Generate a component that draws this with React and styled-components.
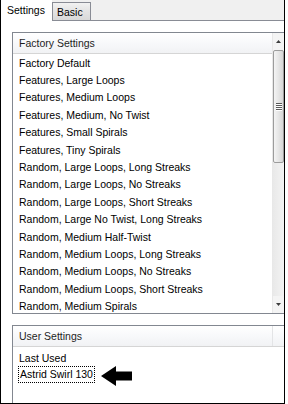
import React from "react";
import styled, { createGlobalStyle } from "styled-components";

const Global = createGlobalStyle`
  html, body { margin: 0; padding: 0; background: #ffffff; }
  body { font-family: "Liberation Sans", Arial, sans-serif; }
  * { box-sizing: border-box; }
`;

const Frame = styled.div`
  width: 285px;
  height: 404px;
  border-left: 1px solid #000;
  border-right: 1px solid #000;
  border-bottom: 1px solid #000;
  display: flex;
  flex-direction: column;
  font-family: "Liberation Sans", Arial, sans-serif;
  font-size: 10.5px;
  color: #000;
`;

const TabStrip = styled.div`
  height: 21px;
  display: flex;
  align-items: flex-end;
  background: #f0f0f0;
`;

const Tab = styled.div`
  height: ${(p) => (p.$active ? "21px" : "19px")};
  width: ${(p) => p.$w}px;
  display: flex;
  align-items: center;
  padding-left: ${(p) => (p.$active ? 6 : 4)}px;
  padding-bottom: ${(p) => (p.$active ? 1 : 0)}px;
  background: ${(p) =>
    p.$active ? "#ffffff" : "linear-gradient(#f2f2f2, #e3e3e3 50%, #d9d9d9)"};
  border: ${(p) => (p.$active ? "none" : "1px solid #898c95")};
  border-bottom: ${(p) => (p.$active ? "none" : "1px solid #898c95")};
`;

const StripFill = styled.div`
  flex: 1;
  height: 21px;
  border-bottom: 1px solid #898c95;
`;

const Panel = styled.div`
  flex: 1;
  display: flex;
  flex-direction: column;
  gap: 11px;
  padding: 11px 0 0 11px;
  background: #fff;
`;

const ListBox = styled.div`
  height: ${(p) => (p.$h ? `${p.$h}px` : "auto")};
  flex: ${(p) => (p.$h ? "0 0 auto" : "1")};
  border: 1px solid #828790;
  border-right: none;
  ${(p) => (p.$noBottom ? "border-bottom: none;" : "")}
  display: grid;
  grid-template-columns: 1fr 12px;
  grid-template-rows: 21px 1fr;
  overflow: hidden;
`;

const Header = styled.div`
  grid-column: ${(p) => (p.$full ? "1 / 3" : "1 / 2")};
  display: flex;
  border-bottom: 1px solid #d5d5d5;
  background: linear-gradient(#ffffff, #f7f8fa 55%, #f1f2f4);
`;

const HeaderCell = styled.div`
  flex: 1;
  display: flex;
  align-items: center;
  padding-left: 6px;
  color: #1e1e1e;
`;

const HeaderFill = styled.div`
  flex: 0 0 12px;
  border-left: 1px solid #e3e4e6;
`;

const Items = styled.div`
  grid-column: 1 / 2;
  overflow: hidden;
  padding-top: ${(p) => p.$pt || 0}px;
`;

const Row = styled.div`
  height: ${(p) => p.$h}px;
  display: flex;
  align-items: center;
  padding-left: ${(p) => p.$pl || 6}px;
  white-space: nowrap;
`;

const FocusItem = styled.span`
  border: 1px dotted #000;
  padding: 1px 1px 1px 1px;
  line-height: 13px;
`;

const Scrollbar = styled.div`
  grid-column: 2 / 3;
  grid-row: 1 / 3;
  display: flex;
  flex-direction: column;
  background: #f0f0f0;
  border-left: 1px solid #e8e8e8;
`;

const ScrollBtn = styled.div`
  height: 17px;
  display: flex;
  align-items: center;
  justify-content: center;
  background: #f4f4f4;
`;

const Thumb = styled.div`
  height: 113px;
  border: 1px solid #9c9c9c;
  border-radius: 2px;
  background: linear-gradient(90deg, #f4f4f4, #e6e6e6 50%, #d6d6d6);
  display: flex;
  flex-direction: column;
  align-items: center;
  justify-content: center;
  gap: 1px;
`;

const Grip = styled.div`
  width: 6px;
  height: 1px;
  background: #5a5a5a;
  box-shadow: 0 1px 0 #ffffff;
`;

const Track = styled.div`
  flex: 1;
  background: linear-gradient(90deg, #e9e9e9, #f3f3f3);
`;

const Arrow = styled.svg`
  margin-left: 6px;
  margin-top: 2px;
  flex: none;
`;

const factory = [
  "Factory Default",
  "Features, Large Loops",
  "Features, Medium Loops",
  "Features, Medium, No Twist",
  "Features, Small Spirals",
  "Features, Tiny Spirals",
  "Random, Large Loops, Long Streaks",
  "Random, Large Loops, No Streaks",
  "Random, Large Loops, Short Streaks",
  "Random, Large No Twist, Long Streaks",
  "Random, Medium Half-Twist",
  "Random, Medium Loops, Long Streaks",
  "Random, Medium Loops, No Streaks",
  "Random, Medium Loops, Short Streaks",
  "Random, Medium Spirals",
];

export default function App() {
  return (
    <>
      <Global />
      <Frame>
        <TabStrip>
          <Tab $active $w={51}>Settings</Tab>
          <Tab $w={39}>Basic</Tab>
          <StripFill />
        </TabStrip>
        <Panel>
          <ListBox $h={282}>
            <Header>
              <HeaderCell>Factory Settings</HeaderCell>
            </Header>
            <Items>
              {factory.map((f) => (
                <Row key={f} $h={17.4}>
                  {f}
                </Row>
              ))}
            </Items>
            <Scrollbar>
              <ScrollBtn>
                <svg width="5" height="3" viewBox="0 0 5 3">
                  <polygon points="2.5,0 5,3 0,3" fill="#3c3c3c" />
                </svg>
              </ScrollBtn>
              <Thumb>
                <Grip />
                <Grip />
                <Grip />
                <Grip />
              </Thumb>
              <Track />
              <ScrollBtn>
                <svg width="5" height="3" viewBox="0 0 5 3">
                  <polygon points="0,0 5,0 2.5,3" fill="#3c3c3c" />
                </svg>
              </ScrollBtn>
            </Scrollbar>
          </ListBox>
          <ListBox $noBottom>
            <Header $full>
              <HeaderCell>User Settings</HeaderCell>
              <HeaderFill />
            </Header>
            <Items $pt={2}>
              <Row $h={17}>Last Used</Row>
              <Row $h={17} $pl={5}>
                <FocusItem>Astrid Swirl 130</FocusItem>
                <Arrow width="31" height="20" viewBox="0 0 31 20">
                  <polygon
                    points="0,10 15,0 15,5.5 31,5.5 31,14.5 15,14.5 15,20"
                    fill="#000"
                  />
                </Arrow>
              </Row>
            </Items>
          </ListBox>
        </Panel>
      </Frame>
    </>
  );
}
